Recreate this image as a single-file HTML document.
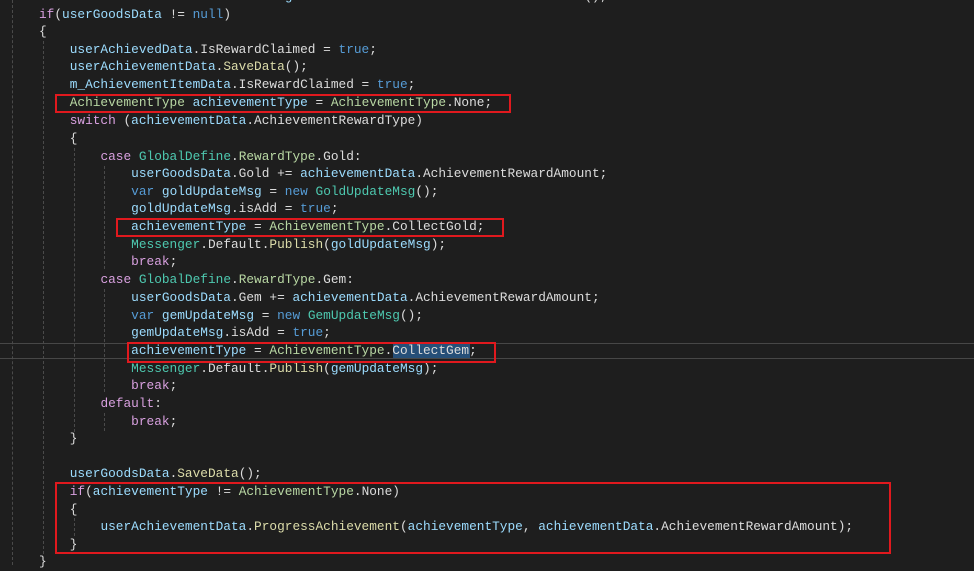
<!DOCTYPE html>
<html><head><meta charset="utf-8"><style>
html,body{margin:0;padding:0}
body{width:974px;height:565px;background:#1e1e1e;position:relative;overflow:hidden;font-family:"Liberation Mono",monospace;font-size:12.8px;color:#dcdcdc}
.l{position:absolute;left:39px;height:18px;line-height:18px;white-space:pre}
.v{color:#9cdcfe}.k{color:#d8a0df}.b{color:#569cd6}.t{color:#4ec9b0}.e{color:#b8d7a3}.m{color:#dcdcaa}
.g{position:absolute;width:0;border-left:1px dashed #4a4a4a}
.box{position:absolute;border:2px solid #e0191e;box-sizing:border-box}
.hl{position:absolute;left:0;width:974px;height:0;border-top:1px solid #474747}
</style></head><body>
<div class="hl" style="top:343px"></div><div class="hl" style="top:358px"></div>
<div style="position:absolute;left:393px;top:344px;width:77px;height:14px;background:#264f78"></div>
<div class="g" style="left:12px;top:0;height:565px"></div>
<div class="g" style="left:43px;top:41px;height:513px"></div>
<div class="g" style="left:74px;top:148px;height:284px"></div>
<div class="g" style="left:74px;top:518px;height:18px"></div>
<div class="g" style="left:104px;top:166px;height:103px"></div>
<div class="g" style="left:104px;top:289px;height:103px"></div>
<div class="g" style="left:104px;top:413px;height:18px"></div>

<div class="l" style="top:-12px"><span class="b">var</span> <span class="v">userGoodsData</span> = <span class="v">userDataManager</span>.Instance.<span class="m">GetUserData</span>&lt;<span class="t">UserGoodsData</span>&gt;();</div>
<div class="l" style="top:6px"><span class="k">if</span>(<span class="v">userGoodsData</span> != <span class="b">null</span>)</div>
<div class="l" style="top:23px">{</div>
<div class="l" style="top:41px">    <span class="v">userAchievedData</span>.IsRewardClaimed = <span class="b">true</span>;</div>
<div class="l" style="top:58px">    <span class="v">userAchievementData</span>.<span class="m">SaveData</span>();</div>
<div class="l" style="top:76px">    <span class="v">m_AchievementItemData</span>.IsRewardClaimed = <span class="b">true</span>;</div>
<div class="l" style="top:94px">    <span class="e">AchievementType</span> <span class="v">achievementType</span> = <span class="e">AchievementType</span>.None;</div>
<div class="l" style="top:112px">    <span class="k">switch</span> (<span class="v">achievementData</span>.AchievementRewardType)</div>
<div class="l" style="top:130px">    {</div>
<div class="l" style="top:148px">        <span class="k">case</span> <span class="t">GlobalDefine</span>.<span class="e">RewardType</span>.Gold:</div>
<div class="l" style="top:165px">            <span class="v">userGoodsData</span>.Gold += <span class="v">achievementData</span>.AchievementRewardAmount;</div>
<div class="l" style="top:183px">            <span class="b">var</span> <span class="v">goldUpdateMsg</span> = <span class="b">new</span> <span class="t">GoldUpdateMsg</span>();</div>
<div class="l" style="top:200px">            <span class="v">goldUpdateMsg</span>.isAdd = <span class="b">true</span>;</div>
<div class="l" style="top:218px">            <span class="v">achievementType</span> = <span class="e">AchievementType</span>.CollectGold;</div>
<div class="l" style="top:236px">            <span class="t">Messenger</span>.Default.<span class="m">Publish</span>(<span class="v">goldUpdateMsg</span>);</div>
<div class="l" style="top:253px">            <span class="k">break</span>;</div>
<div class="l" style="top:271px">        <span class="k">case</span> <span class="t">GlobalDefine</span>.<span class="e">RewardType</span>.Gem:</div>
<div class="l" style="top:289px">            <span class="v">userGoodsData</span>.Gem += <span class="v">achievementData</span>.AchievementRewardAmount;</div>
<div class="l" style="top:307px">            <span class="b">var</span> <span class="v">gemUpdateMsg</span> = <span class="b">new</span> <span class="t">GemUpdateMsg</span>();</div>
<div class="l" style="top:324px">            <span class="v">gemUpdateMsg</span>.isAdd = <span class="b">true</span>;</div>
<div class="l" style="top:342px">            <span class="v">achievementType</span> = <span class="e">AchievementType</span>.CollectGem;</div>
<div class="l" style="top:360px">            <span class="t">Messenger</span>.Default.<span class="m">Publish</span>(<span class="v">gemUpdateMsg</span>);</div>
<div class="l" style="top:377px">            <span class="k">break</span>;</div>
<div class="l" style="top:395px">        <span class="k">default</span>:</div>
<div class="l" style="top:413px">            <span class="k">break</span>;</div>
<div class="l" style="top:430px">    }</div>
<div class="l" style="top:465px">    <span class="v">userGoodsData</span>.<span class="m">SaveData</span>();</div>
<div class="l" style="top:483px">    <span class="k">if</span>(<span class="v">achievementType</span> != <span class="e">AchievementType</span>.None)</div>
<div class="l" style="top:501px">    {</div>
<div class="l" style="top:518px">        <span class="v">userAchievementData</span>.<span class="m">ProgressAchievement</span>(<span class="v">achievementType</span>, <span class="v">achievementData</span>.AchievementRewardAmount);</div>
<div class="l" style="top:536px">    }</div>
<div class="l" style="top:553px">}</div>

<div class="box" style="left:55px;top:94px;width:456px;height:19px"></div>
<div class="box" style="left:116px;top:218px;width:388px;height:19px"></div>
<div class="box" style="left:127px;top:342px;width:369px;height:21px"></div>
<div class="box" style="left:55px;top:482px;width:836px;height:72px"></div>
</body></html>
